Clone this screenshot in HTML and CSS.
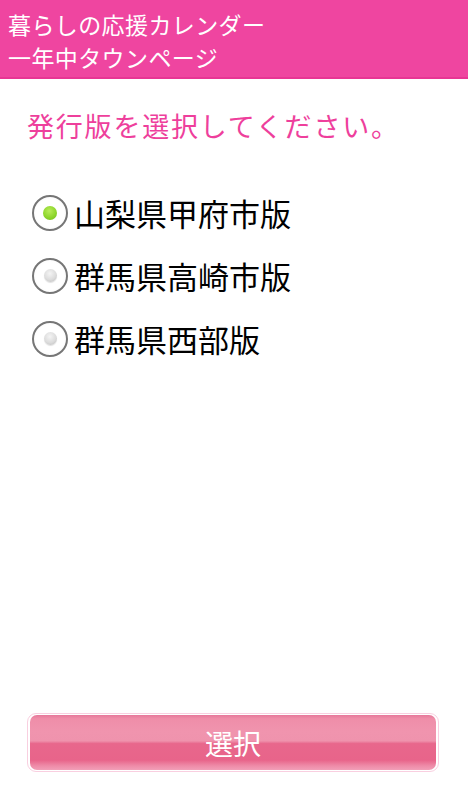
FILE: index.html
```html
<!DOCTYPE html>
<html>
<head>
<meta charset="utf-8">
<link rel="stylesheet" href="styles.css">
</head>
<body>
<div id="page">
  <div class="titlebar">
    <div class="titleLine">暮らしの応援カレンダー</div>
    <div class="titleLine">一年中タウンページ</div>
  </div>

  <div class="content">
    <p class="prompt">発行版を選択してください。</p>

    <ul class="editionList">
      <li><label class="edition"><input type="radio" name="edition" value="kofu" checked> <span>山梨県甲府市版</span></label></li>
      <li><label class="edition"><input type="radio" name="edition" value="takasaki"> <span>群馬県高崎市版</span></label></li>
      <li><label class="edition"><input type="radio" name="edition" value="seibu"> <span>群馬県西部版</span></label></li>
    </ul>

    <div class="buttonBox">
      <button type="button" class="selectButton">選択</button>
    </div>
  </div>
</div>
</body>
</html>
```

FILE: styles.css
```css
html, body
{
   margin: 0;
   padding: 0;
   background: #fff;
}

#page
{
   display: flex;
   flex-direction: column;
   height: 800px;
   font-family: "Noto Sans CJK JP", "Noto Sans", sans-serif;
}

.titlebar
{
   background: #ef45a0;
   border-bottom: 2px solid #e83594;
   padding: 8px 8px 3px 8px;
   height: 66px;
}

.titleLine
{
   color: #fff;
   font-size: 23px;
   line-height: 33px;
   letter-spacing: 0.4px;
   white-space: nowrap;
}

.content
{
   flex: 1;
   display: flex;
   flex-direction: column;
}

.prompt
{
   margin: 33px 0 0 27px;
   color: #ee3f9c;
   font-size: 27px;
   line-height: 27px;
   letter-spacing: 1.8px;
}

.editionList
{
   list-style: none;
   margin: 42px 0 0 0;
   padding: 0 0 0 32px;
}

.edition
{
   display: flex;
   align-items: center;
   gap: 6px;
   height: 63px;
   font-size: 31px;
   color: #000;
}

.edition span
{
   line-height: 31px;
}

.edition input
{
   -webkit-appearance: none;
   appearance: none;
   margin: 0;
   width: 36px;
   height: 36px;
   border-radius: 50%;
   border: 2px solid #767676;
   box-sizing: border-box;
   background: radial-gradient(circle, #fff 0, #fff 60%, #f2f2f2 100%);
   display: flex;
   align-items: center;
   justify-content: center;
}

.edition input::after
{
   content: "";
   width: 13px;
   height: 13px;
   border-radius: 50%;
   background: radial-gradient(circle at 45% 35%, #f4f4f4 0, #dcdcdc 55%, #b9b9b9 100%);
   box-shadow: 0 1px 1px rgba(0,0,0,0.12);
}

.edition input:checked::after
{
   width: 14px;
   height: 14px;
   background: radial-gradient(circle at 45% 35%, #b8ec5a 0, #8ed62c 55%, #6cb818 100%);
   box-shadow: none;
}

.buttonBox
{
   margin: auto 29px 28px 27px;
   border: 1px solid #f9cfe0;
   border-radius: 9px;
   padding: 1px 2px;
}

.selectButton
{
   display: block;
   width: 100%;
   height: 55px;
   border: 0;
   border-radius: 7px;
   padding: 0;
   color: #fff;
   font-family: "Noto Sans CJK JP", "Noto Sans", sans-serif;
   font-size: 28px;
   background: linear-gradient(to bottom, #e6789a 0, #ef8ea9 7%, #f094ae 30%, #ef93ad 47%, #e8678c 52%, #e8648a 82%, #ee8aa7 92%, #f29fb8 100%);
}
```
